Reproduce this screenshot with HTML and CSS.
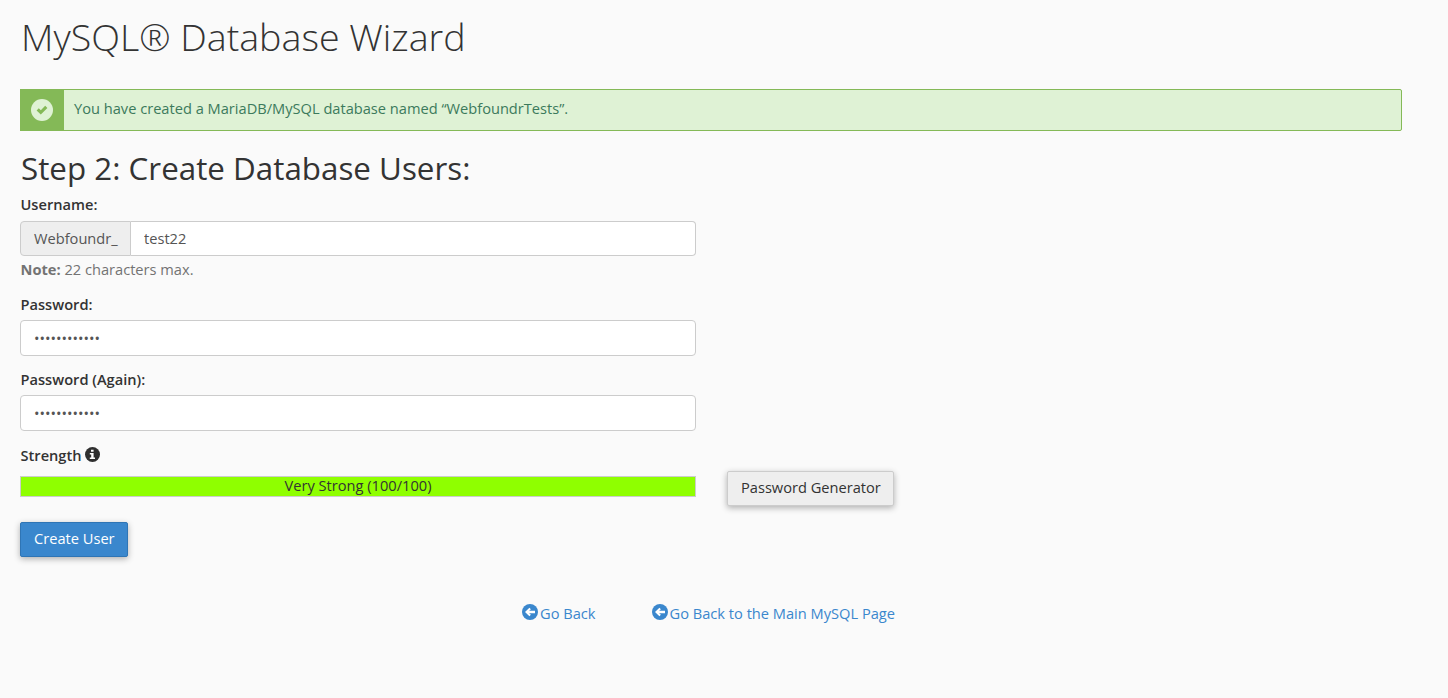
FILE: index.html
```html
<!DOCTYPE html>
<html lang="en">
<head>
<meta charset="utf-8">
<title>MySQL Database Wizard</title>
<link rel="stylesheet" href="styles.css">
</head>
<body>
<main class="page">
  <h1 class="title">MySQL® Database Wizard</h1>
  <div class="alert">
    <div class="alert-icon">
      <svg width="22" height="22" viewBox="0 0 22 22"><circle cx="11" cy="11" r="11" fill="#dff2d5"/><path d="M5.6 11.4l2.2-2.2 2 2 4.4-4.4 2.2 2.2-6.6 6.6z" fill="#84b957"/></svg>
    </div>
    <div class="alert-text">You have created a MariaDB/MySQL database named “WebfoundrTests”.</div>
  </div>
  <h2 class="step">Step 2: Create Database Users:</h2>
  <form class="form">
    <label class="label label-user" for="user">Username:</label>
    <div class="input-group">
      <span class="addon">Webfoundr_</span>
      <input class="input input-joined" id="user" type="text" value="test22">
    </div>
    <p class="note"><strong>Note:</strong> 22 characters max.</p>
    <label class="label label-pass" for="pw1">Password:</label>
    <input class="input input-solo" id="pw1" type="password" value="abcdefghijkl">
    <label class="label label-again" for="pw2">Password (Again):</label>
    <input class="input input-solo" id="pw2" type="password" value="abcdefghijkl">
    <div class="strength-label">
      <span>Strength</span>
      <svg class="info" width="15" height="15" viewBox="0 0 15 15"><circle cx="7.5" cy="7.5" r="7.5" fill="#2f2f2f"/><path d="M6 2.8h2.6v2H6zM4.8 6h3.8v4.6h1.4V12H4.8v-1.4h1.4V7.4H4.8z" fill="#fff"/></svg>
    </div>
    <div class="strength-row">
      <div class="bar">Very Strong (100/100)</div>
      <button class="btn btn-default" type="button">Password Generator</button>
    </div>
    <button class="btn btn-primary" type="button">Create User</button>
  </form>
  <nav class="links">
    <a class="link" href="#"><svg width="16" height="16" viewBox="0 0 16 16"><circle cx="8" cy="8" r="8" fill="#3a87cd"/><path d="M3 8l4.4-4.3 1.5 1.5-1.8 1.6h5.9v2.4H7.1l1.8 1.6-1.5 1.5z" fill="#fff"/></svg>Go Back</a>
    <a class="link" href="#"><svg width="16" height="16" viewBox="0 0 16 16"><circle cx="8" cy="8" r="8" fill="#3a87cd"/><path d="M3 8l4.4-4.3 1.5 1.5-1.8 1.6h5.9v2.4H7.1l1.8 1.6-1.5 1.5z" fill="#fff"/></svg>Go Back to the Main MySQL Page</a>
  </nav>
</main>
</body>
</html>
```

FILE: styles.css
```css
* { box-sizing: border-box; }
html, body { margin: 0; height: 100%; }
body {
  background: #fafafa;
  color: #333;
  font-family: "Open Sans", sans-serif;
  font-size: 14.63px;
  line-height: 20px;
  overflow: hidden;
}
.page { padding: 0 46px 0 20px; }
.title {
  margin: 0;
  padding: 12px 0 0 1px;
  font-size: 37.6px;
  line-height: 50px;
  font-weight: 300;
  color: #333;
}
.alert {
  display: flex;
  margin-top: 27px;
  height: 42px;
  background: #dff2d5;
  border: 1px solid #84b957;
  border-radius: 2px;
}
.alert-icon {
  width: 44px;
  margin: -1px 0 -1px -1px;
  background: #84b957;
  display: flex;
  align-items: center;
  justify-content: center;
}
.alert-text { padding: 0 10px; line-height: 36px; color: #3c7a5c; }
.step {
  margin: 16px 0 0;
  padding-left: 1px;
  font-size: 31.35px;
  line-height: 42px;
  font-weight: 400;
  color: #333;
}
.form { width: 676px; }
.label { display: block; padding-left: .5px; font-weight: 600; }
.label-user { margin-top: 5px; }
.label-pass { margin-top: 15px; }
.label-again { margin-top: 13px; }
.input-group { display: flex; margin-top: 7px; }
.addon {
  flex: none;
  width: 111px;
  height: 35px;
  border: 1px solid #ccc;
  border-radius: 4px 0 0 4px;
  background: #eee;
  color: #555;
  padding: 0 13px;
  line-height: 33px;
}
.input {
  display: block;
  width: 100%;
  border: 1px solid #ccc;
  background: #fff;
  color: #555;
  font-family: "Open Sans", sans-serif;
  font-size: 14.63px;
  padding: 0 13px;
  outline: none;
}
.input-joined { height: 35px; padding-bottom: 2px; border-left: 0; border-radius: 0 4px 4px 0; }
.input-solo { height: 36px; margin-top: 6px; border-radius: 4px; }
.note { margin: 3px 0 0; padding-left: .5px; color: #737373; }
.note strong { font-weight: 700; }
.strength-label { display: flex; align-items: center; gap: 3px; margin-top: 14px; padding-left: .5px; }
.strength-label span { font-weight: 600; }
.info { position: relative; top: -1px; }
.strength-row {
  display: flex;
  align-items: flex-start;
  width: 874px;
  margin-top: 11px;
  gap: 31px;
}
.bar {
  flex: none;
  width: 676px;
  height: 21px;
  background: #8fff00;
  border: 1px solid #ccc;
  text-align: center;
  line-height: 16px;
  color: #333;
}
.btn {
  display: block;
  height: 35px;
  font-family: "Open Sans", sans-serif;
  font-size: 14.63px;
  line-height: 20px;
  padding: 0 13px 4px;
  border-radius: 2px;
  cursor: pointer;
  box-shadow: 0 2px 6px rgba(0,0,0,.3);
  white-space: nowrap;
}
.btn-default {
  flex: none;
  width: 167px;
  margin-top: -5px;
  background: #eee;
  border: 1px solid #ccc;
  color: #333;
}
.btn-primary {
  width: 108px;
  margin-top: 16px;
  background: #3a87cd;
  border: 1px solid #2f75b5;
  color: #fff;
}
.links {
  display: flex;
  justify-content: center;
  gap: 56px;
  width: 1377px;
  margin-top: 46px;
}
.link {
  display: flex;
  align-items: center;
  gap: 2px;
  color: #3a87cd;
  text-decoration: none;
}
.link svg { position: relative; top: -1px; }
```
